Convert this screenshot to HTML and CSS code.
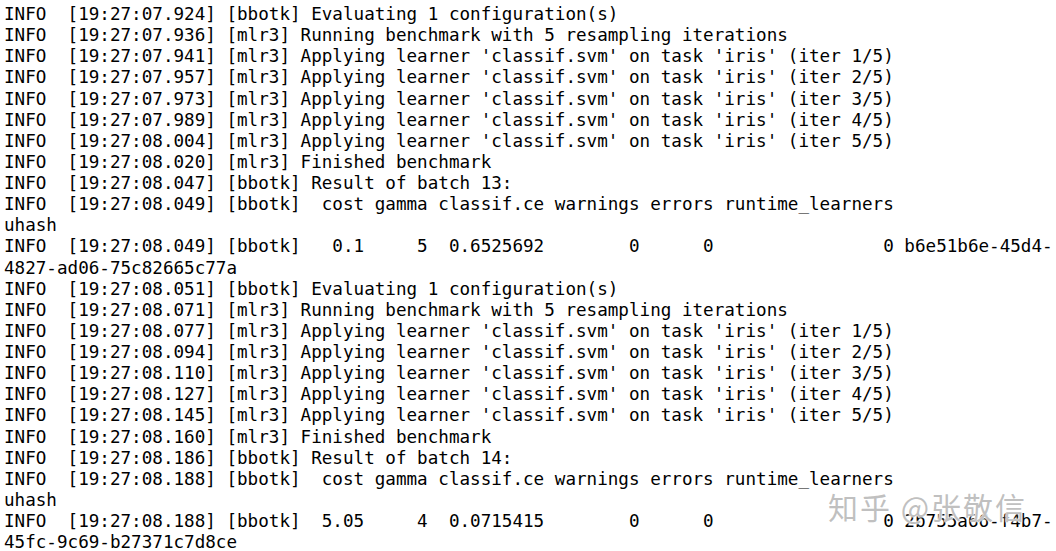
FILE: index.html
```html
<!DOCTYPE html>
<html>
<head>
<meta charset="utf-8">
<link rel="stylesheet" href="styles.css">
</head>
<body>
<div class="screen">
<pre class="log">INFO  [19:27:07.924] [bbotk] Evaluating 1 configuration(s)
INFO  [19:27:07.936] [mlr3] Running benchmark with 5 resampling iterations
INFO  [19:27:07.941] [mlr3] Applying learner 'classif.svm' on task 'iris' (iter 1/5)
INFO  [19:27:07.957] [mlr3] Applying learner 'classif.svm' on task 'iris' (iter 2/5)
INFO  [19:27:07.973] [mlr3] Applying learner 'classif.svm' on task 'iris' (iter 3/5)
INFO  [19:27:07.989] [mlr3] Applying learner 'classif.svm' on task 'iris' (iter 4/5)
INFO  [19:27:08.004] [mlr3] Applying learner 'classif.svm' on task 'iris' (iter 5/5)
INFO  [19:27:08.020] [mlr3] Finished benchmark
INFO  [19:27:08.047] [bbotk] Result of batch 13:
INFO  [19:27:08.049] [bbotk]  cost gamma classif.ce warnings errors runtime_learners
uhash
INFO  [19:27:08.049] [bbotk]   0.1     5  0.6525692        0      0                0 b6e51b6e-45d4-
4827-ad06-75c82665c77a
INFO  [19:27:08.051] [bbotk] Evaluating 1 configuration(s)
INFO  [19:27:08.071] [mlr3] Running benchmark with 5 resampling iterations
INFO  [19:27:08.077] [mlr3] Applying learner 'classif.svm' on task 'iris' (iter 1/5)
INFO  [19:27:08.094] [mlr3] Applying learner 'classif.svm' on task 'iris' (iter 2/5)
INFO  [19:27:08.110] [mlr3] Applying learner 'classif.svm' on task 'iris' (iter 3/5)
INFO  [19:27:08.127] [mlr3] Applying learner 'classif.svm' on task 'iris' (iter 4/5)
INFO  [19:27:08.145] [mlr3] Applying learner 'classif.svm' on task 'iris' (iter 5/5)
INFO  [19:27:08.160] [mlr3] Finished benchmark
INFO  [19:27:08.186] [bbotk] Result of batch 14:
INFO  [19:27:08.188] [bbotk]  cost gamma classif.ce warnings errors runtime_learners
uhash
INFO  [19:27:08.188] [bbotk]  5.05     4  0.0715415        0      0                0 2b755a66-f4b7-
45fc-9c69-b27371c7d8ce</pre>
<div class="watermark">知乎 @张敬信</div>
</div>
</body>
</html>
```
FILE: styles.css
```css
html, body {
  margin: 0;
  padding: 0;
  background: #ffffff;
}
.screen {
  position: relative;
  width: 1056px;
  height: 551px;
  overflow: hidden;
}
.log {
  margin: 0;
  padding: 4px 0 0 4px;
  font-family: "DejaVu Sans Mono", monospace;
  font-size: 17.6px;
  line-height: 21.12px;
  color: #000;
  white-space: pre;
}
.watermark {
  position: absolute;
  left: 828px;
  top: 491px;
  font-family: "Noto Sans CJK SC", sans-serif;
  font-size: 30px;
  line-height: 30px;
  letter-spacing: 2px;
  color: rgba(175, 175, 175, 0.8);
  text-shadow: 0 0 2px #fff, 0 0 2px #fff, 0 0 1px #fff;
  white-space: nowrap;
}
```
